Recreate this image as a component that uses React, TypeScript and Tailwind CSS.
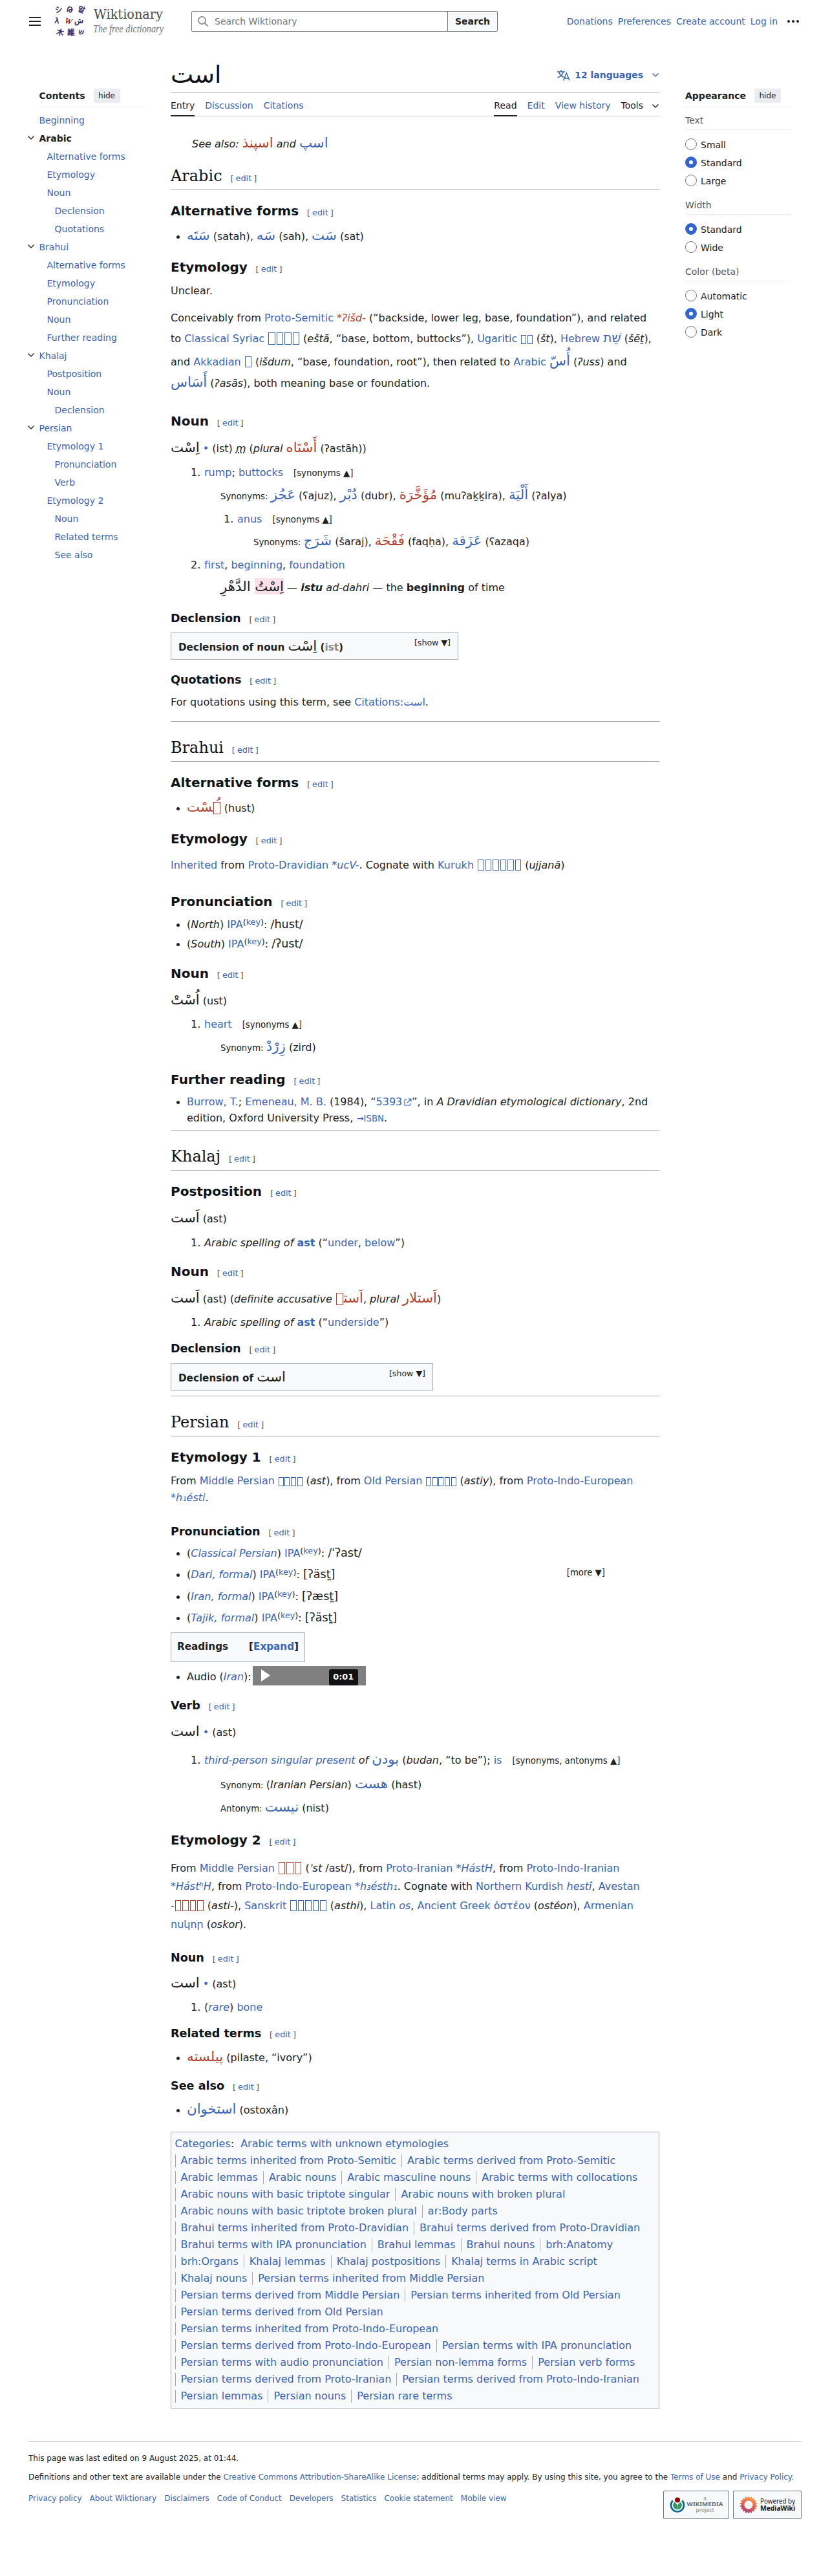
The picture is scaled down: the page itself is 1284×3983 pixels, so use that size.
import type { ReactNode } from 'react'
import clsx from 'clsx'

type Kids = { children: ReactNode }

/** Blue link. */
function A({ children, className }: { children: ReactNode; className?: string }) {
  return <a href="#" className={clsx('text-[#3a65b6]', className)}>{children}</a>
}

/** Right-to-left term in the enlarged script size. */
function Ar({ children, red, plain, className }: { children: ReactNode; red?: boolean; plain?: boolean; className?: string }) {
  return (
    <bdi
      dir="rtl"
      className={clsx(
        'text-[21.3px] leading-[0] not-italic',
        plain ? 'text-[#202122]' : red ? 'text-[#b34231]' : 'text-[#3a65b6]',
        className,
      )}
    >
      {children}
    </bdi>
  )
}

/** Term in another script. */
function Script({ children, className }: { children: ReactNode; className?: string }) {
  return <bdi className={clsx('leading-[0]', className ?? 'text-[#3a65b6]')}>{children}</bdi>
}

/** Placeholder for a character without a glyph. */
function Box({ children }: { children?: ReactNode }) {
  return (
    <span className="relative mx-[.05em] inline-block h-[.88em] w-[.5em] border border-current align-[-.17em]">{children}</span>
  )
}

function Boxes({ n, className }: { n: number; className: string }) {
  return (
    <bdi className={clsx('leading-[0]', className)}>
      {Array.from({ length: n }, (_, i) => <Box key={i} />)}
    </bdi>
  )
}

function Line({ children, className }: { children: ReactNode; className: string }) {
  return <div className={clsx('h-[25px] leading-[25px] whitespace-nowrap', className)}>{children}</div>
}

function Bullet({ children, className }: { children: ReactNode; className?: string }) {
  return (
    <div className={clsx('h-[25px] leading-[25px] whitespace-nowrap flex items-center pl-[9px]', className)}>
      <span className="w-[5px] h-[5px] mt-[2px] rounded-full bg-[#202122] mr-[11px]" />
      <div className="h-[25px]">{children}</div>
    </div>
  )
}

function Item({ n, children, className }: { n: number; children: ReactNode; className: string }) {
  return (
    <div className={clsx('h-[25px] leading-[25px] whitespace-nowrap flex', className)}>
      <span className="w-[21px] shrink-0">{n}.</span>
      <div>{children}</div>
    </div>
  )
}

function Edit() {
  return (
    <span className="ml-[12.8px] text-[12.8px] leading-[0] font-normal text-[#54595d] [font-family:'DejaVu_Sans',sans-serif]">
      <span className="mr-[3.2px]">[</span>
      <A>edit</A>
      <span className="ml-[3.2px]">]</span>
    </span>
  )
}

function H2({ children, className }: { children: ReactNode; className: string }) {
  return (
    <h2 className={clsx("h-[36px] border-b border-[#a2a9b1] text-[24px] leading-[28px] text-[#101418] [font-family:'DejaVu_Serif',serif]", className)}>
      {children}
      <Edit />
    </h2>
  )
}

function H3({ children, className }: { children: ReactNode; className: string }) {
  return (
    <h3 className={clsx('h-[24px] text-[20px] leading-[24px] font-bold text-[#101418]', className)}>
      {children}
      <Edit />
    </h3>
  )
}

function H4({ children, className }: { children: ReactNode; className: string }) {
  return (
    <h4 className={clsx('h-[20px] text-[17.6px] leading-[20px] font-bold text-[#101418]', className)}>
      {children}
      <Edit />
    </h4>
  )
}

function Small({ children }: Kids) {
  return <span className="text-[13.3px]">{children}</span>
}

function Toggle({ children }: Kids) {
  return <span className="ml-4 text-[13.3px]">[{children} ▲]</span>
}

function Ipa({ where, link, children }: { where: string; link?: boolean; children: ReactNode }) {
  return (
    <>
      (<i className={link ? 'text-[#3a65b6]' : ''}>{where}</i>) <A>IPA</A>
      <span className="align-[5px] text-[12.8px] leading-[0]">(<A>key</A>)</span>:{' '}
      <span className="text-[17.6px] leading-[0]">{children}</span>
    </>
  )
}

function Chevron({ className }: { className?: string }) {
  return (
    <svg width="12" height="12" viewBox="0 0 12 12" fill="none" stroke="currentColor" strokeWidth="1.3" className={className}>
      <path d="M1.500 3.500 6 8l4.500-4.500" />
    </svg>
  )
}

const TOC: { label: string; level: number; open?: boolean; active?: boolean }[] = [
  { label: 'Beginning', level: 0 },
  { label: 'Arabic', level: 0, open: true, active: true },
  { label: 'Alternative forms', level: 1 },
  { label: 'Etymology', level: 1 },
  { label: 'Noun', level: 1 },
  { label: 'Declension', level: 2 },
  { label: 'Quotations', level: 2 },
  { label: 'Brahui', level: 0, open: true },
  { label: 'Alternative forms', level: 1 },
  { label: 'Etymology', level: 1 },
  { label: 'Pronunciation', level: 1 },
  { label: 'Noun', level: 1 },
  { label: 'Further reading', level: 1 },
  { label: 'Khalaj', level: 0, open: true },
  { label: 'Postposition', level: 1 },
  { label: 'Noun', level: 1 },
  { label: 'Declension', level: 2 },
  { label: 'Persian', level: 0, open: true },
  { label: 'Etymology 1', level: 1 },
  { label: 'Pronunciation', level: 2 },
  { label: 'Verb', level: 2 },
  { label: 'Etymology 2', level: 1 },
  { label: 'Noun', level: 2 },
  { label: 'Related terms', level: 2 },
  { label: 'See also', level: 2 },
]

const INDENT = ['pl-0', 'pl-3', 'pl-6']

const CATEGORIES: string[][] = [
  ['Arabic terms inherited from Proto-Semitic', 'Arabic terms derived from Proto-Semitic'],
  ['Arabic lemmas', 'Arabic nouns', 'Arabic masculine nouns', 'Arabic terms with collocations'],
  ['Arabic nouns with basic triptote singular', 'Arabic nouns with broken plural'],
  ['Arabic nouns with basic triptote broken plural', 'ar:Body parts'],
  ['Brahui terms inherited from Proto-Dravidian', 'Brahui terms derived from Proto-Dravidian'],
  ['Brahui terms with IPA pronunciation', 'Brahui lemmas', 'Brahui nouns', 'brh:Anatomy'],
  ['brh:Organs', 'Khalaj lemmas', 'Khalaj postpositions', 'Khalaj terms in Arabic script'],
  ['Khalaj nouns', 'Persian terms inherited from Middle Persian'],
  ['Persian terms derived from Middle Persian', 'Persian terms inherited from Old Persian'],
  ['Persian terms derived from Old Persian'],
  ['Persian terms inherited from Proto-Indo-European'],
  ['Persian terms derived from Proto-Indo-European', 'Persian terms with IPA pronunciation'],
  ['Persian terms with audio pronunciation', 'Persian non-lemma forms', 'Persian verb forms'],
  ['Persian terms derived from Proto-Iranian', 'Persian terms derived from Proto-Indo-Iranian'],
  ['Persian lemmas', 'Persian nouns', 'Persian rare terms'],
]

// [glyph, x, y, rotation]
const LOGO_TILES: [string, number, number, number][] = [
  ['シ', 8, 12, -8],
  ['Թ', 25, 12, 10],
  ['말', 43, 12, 18],
  ['λ', 5, 29, 6],
  ['ش', 39, 29, 0],
  ['木', 10, 47, 14],
  ['維', 27, 47, 0],
  ['ש', 43, 46, 5],
]

function Logo() {
  return (
    <div className="flex items-center">
      <svg width="52" height="52" viewBox="0 0 52 52" className="overflow-visible [font-family:'DejaVu_Sans','Noto_Sans_CJK_JP','Noto_Sans_CJK_KR',sans-serif]">
        {LOGO_TILES.map(([glyph, x, y, r]) => (
          <text key={glyph} x={x} y={y} fontSize="11.5" stroke="#1a1259" strokeWidth=".4" fill="#1a1259" textAnchor="middle" transform={`rotate(${r} ${x} ${y - 4})`}>
            {glyph}
          </text>
        ))}
        <text x="23" y="30" fontSize="13" fontStyle="italic" fontWeight="bold" fill="#a31414" textAnchor="middle" transform="rotate(14 23 25)" className="[font-family:'Liberation_Serif',serif]">
          W
        </text>
      </svg>
      <svg width="112" height="48" viewBox="0 0 112 48" className="ml-[9px] overflow-visible [font-family:'DejaVu_Serif',serif]">
        <text x="1" y="20" fontSize="20" fill="#474b50" textLength="107" lengthAdjust="spacingAndGlyphs">Wiktionary</text>
        <text x="0" y="41" fontSize="17" fontStyle="italic" fill="#72777d" textLength="109" lengthAdjust="spacingAndGlyphs" className="[font-family:'Liberation_Serif',serif]">
          The free dictionary
        </text>
      </svg>
    </div>
  )
}

function Header() {
  return (
    <header className="flex h-[66px] items-center pl-[45px] pr-[48px] text-[14px]">
      <div className="flex w-[18px] flex-col gap-[4px]">
        <span className="h-[2px] bg-[#202122]" />
        <span className="h-[2px] bg-[#202122]" />
        <span className="h-[2px] bg-[#202122]" />
      </div>
      <div className="ml-[20px] w-[213px]"><Logo /></div>
      <div className="flex h-[32px] w-[474px] items-stretch rounded-[2px] border border-[#72777d]">
        <div className="flex flex-1 items-center gap-[9px] pl-[8px] text-[#72777d]">
          <svg width="18" height="18" viewBox="0 0 18 18" fill="none" stroke="#8b9095" strokeWidth="1.8">
            <circle cx="7.500" cy="7.500" r="5.600" />
            <path d="m11.500 11.500 5 5" />
          </svg>
          Search Wiktionary
        </div>
        <button type="button" className="w-[77px] border-l border-[#72777d] bg-[#f8f9fa] font-bold text-[#202122]">Search</button>
      </div>
      <nav className="ml-auto flex items-center gap-[8px]">
        <A>Donations</A>
        <A>Preferences</A>
        <A>Create account</A>
        <A>Log in</A>
        <span className="ml-[7px] flex gap-[3px]">
          <span className="h-[4px] w-[4px] rounded-full bg-[#202122]" />
          <span className="h-[4px] w-[4px] rounded-full bg-[#202122]" />
          <span className="h-[4px] w-[4px] rounded-full bg-[#202122]" />
        </span>
      </nav>
    </header>
  )
}

function PanelTitle({ children }: Kids) {
  return (
    <div className="flex h-[29px] items-start border-b border-[#eaecf0]">
      <span className="text-[14px] leading-[22px] font-bold text-[#202122]">{children}</span>
      <span className="ml-[13px] h-[22px] rounded-[2px] bg-[#eaecf0] px-[7.500px] text-[12px] leading-[22px] text-[#202122]">hide</span>
    </div>
  )
}

function Contents() {
  return (
    <nav className="w-[264px] shrink-0 pt-[71px] pl-[60.5px]">
      <div className="w-[164px]">
        <PanelTitle>Contents</PanelTitle>
        <ul className="mt-[6px] text-[14px] leading-[28px]">
          {TOC.map((t, i) => (
            <li key={i} className={clsx('relative h-[28px]', INDENT[t.level])}>
              {t.open && <Chevron className="absolute top-[7px] -left-[19px] text-[#202122]" />}
              {t.active ? <b className="text-[#202122]">{t.label}</b> : <A>{t.label}</A>}
            </li>
          ))}
        </ul>
      </div>
    </nav>
  )
}

function RadioGroup({ title, options, value, className }: { title: string; options: string[]; value: string; className: string }) {
  return (
    <div className={clsx('text-[14px]', className)}>
      <div className="h-[23px] border-b border-[#eaecf0] leading-[16px] text-[#54595d]">{title}</div>
      <div className="mt-[8px]">
        {options.map((o) => (
          <label key={o} className="flex h-[28px] items-center gap-[6px] text-[#202122]">
            {o === value ? (
              <span className="h-[18px] w-[18px] rounded-full border-[6px] border-[#3366cc] bg-white" />
            ) : (
              <span className="h-[18px] w-[18px] rounded-full border border-[#72777d] bg-white" />
            )}
            <span className="pt-[2px]">{o}</span>
          </label>
        ))}
      </div>
    </div>
  )
}

function Appearance() {
  return (
    <aside className="ml-[40px] w-[164px] pt-[71px]">
      <PanelTitle>Appearance</PanelTitle>
      <RadioGroup className="mt-[12px]" title="Text" options={['Small', 'Standard', 'Large']} value="Standard" />
      <RadioGroup className="mt-[16px]" title="Width" options={['Standard', 'Wide']} value="Standard" />
      <RadioGroup className="mt-[16px]" title="Color (beta)" options={['Automatic', 'Light', 'Dark']} value="Light" />
    </aside>
  )
}

function PageTitle() {
  return (
    <>
      <div className="flex h-[77px] items-end justify-between border-b border-[#a2a9b1]">
        <h1 dir="rtl" className="text-[37.4px] leading-[54px] text-[#101418]">است</h1>
        <div className="flex h-[52px] items-center text-[14px] font-bold text-[#3a65b6]">
          <svg width="20" height="17" viewBox="0 0 20 17" fill="none" stroke="currentColor" strokeWidth="1.5">
            <path d="M0 3h12M6 0v3M2.500 3c1 4 4 7 7.500 8.500M9.500 3C8.500 7 5 10.500.5 12M9.500 16.500 14.300 5l4.800 11.500M11 13h6.500" />
          </svg>
          <span className="ml-[7px]">12 languages</span>
          <Chevron className="ml-[13px]" />
        </div>
      </div>
      <div className="flex h-[37px] items-end justify-between border-b border-[#c8ccd1] text-[14px] leading-[29px]">
        <div className="-mb-px flex gap-[16px]">
          <span className="border-b-2 border-[#202122]">Entry</span>
          <A>Discussion</A>
          <A>Citations</A>
        </div>
        <div className="-mb-px flex gap-[16px]">
          <span className="border-b-2 border-[#202122]">Read</span>
          <A>Edit</A>
          <A>View history</A>
          <span className="flex">Tools<Chevron className="mt-[9px] ml-[13px]" /></span>
        </div>
      </div>
    </>
  )
}

function NavBox({ children, className }: { children: ReactNode; className: string }) {
  return (
    <div className={clsx('flex h-[42px] justify-between border border-[#a2a9b1] bg-[#f8f9fa] px-[11px] text-[15.2px] leading-[18px] font-bold', className)}>
      <div className="pt-[13px]">{children}</div>
      <span className="pt-[6px] text-[12.6px] font-normal">[show ▼]</span>
    </div>
  )
}

function ArabicSection() {
  return (
    <section>
      <H2 className="mt-[23px]">Arabic</H2>
      <H3 className="mt-[20px]">Alternative forms</H3>
      <Bullet className="mt-[15px]">
        <Ar>سَتَه</Ar> (satah), <Ar>سَه</Ar> (sah), <Ar>سَت</Ar> (sat)
      </Bullet>
      <H3 className="mt-[23px]">Etymology</H3>
      <Line className="mt-[12px]">Unclear.</Line>
      <Line className="mt-[17px]">
        Conceivably from <A>Proto-Semitic</A> <i className="text-[#b34231]">*ʔišd-</i> (“backside, lower leg, base, foundation”), and related
      </Line>
      <Line className="mt-[7px]">
        to <A>Classical Syriac</A> <Boxes n={4} className="text-[20.8px] text-[#3a65b6]" /> (<i>eštā</i>, “base, bottom, buttocks”), <A>Ugaritic</A>{' '}
        <Boxes n={2} className="text-[#3a65b6]" /> (<i>št</i>), <A>Hebrew</A> <Script className="text-[20px] text-[#3a65b6]">שֵׁת</Script> (<i>šēṯ</i>),
      </Line>
      <Line className="mt-[11px]">
        and <A>Akkadian</A> <Boxes n={1} className="text-[20px] text-[#3a65b6]" /> (<i>išdum</i>, “base, foundation, root”), then related to <A>Arabic</A>{' '}
        <Ar>أُسّ</Ar> (<i>ʔuss</i>) and
      </Line>
      <Line className="mt-[8px]">
        <Ar>أَسَاس</Ar> (<i>ʔasās</i>), both meaning base or foundation.
      </Line>
      <H3 className="mt-[34px]">Noun</H3>
      <Line className="mt-[18px]">
        <Ar plain>اِسْت</Ar> <A>•</A> (ist) <i className="underline decoration-dotted">m</i> (<i>plural</i> <Ar red>أَسْتَاه</Ar> (ʔastāh))
      </Line>
      <Item n={1} className="mt-[12px] ml-[31px]">
        <A>rump</A>; <A>buttocks</A><Toggle>synonyms</Toggle>
      </Item>
      <Line className="mt-[11px] ml-[77px]">
        <Small>Synonyms: </Small><Ar>عَجُز</Ar> (ʕajuz), <Ar>دُبْر</Ar> (dubr), <Ar red>مُؤَخَّرَة</Ar> (muʔaḵḵira), <Ar>أَلْيَة</Ar> (ʔalya)
      </Line>
      <Item n={1} className="mt-[11px] ml-[82px]">
        <A>anus</A><Toggle>synonyms</Toggle>
      </Item>
      <Line className="mt-[10px] ml-[128px]">
        <Small>Synonyms: </Small><Ar>شَرَج</Ar> (šaraj), <Ar red>فَقْحَة</Ar> (faqḥa), <Ar>عَزَقة</Ar> (ʕazaqa)
      </Line>
      <Item n={2} className="mt-[11px] ml-[31px]">
        <A>first</A>, <A>beginning</A>, <A>foundation</A>
      </Item>
      <Line className="mt-[10px] ml-[77px]">
        <Ar plain><span className="bg-[#fbdfe9]">اِسْتُ</span> الدَّهْرِ</Ar> — <i><b>istu</b> ad-dahri</i> — the <b>beginning</b> of time
      </Line>
      <H4 className="mt-[25px]">Declension</H4>
      <NavBox className="mt-[12px] w-[445px]">
        Declension of noun <Ar plain className="text-[20.2px] font-normal">اِسْت</Ar> (<span className="text-[#888]">ist</span>)
      </NavBox>
      <H4 className="mt-[21px]">Quotations</H4>
      <Line className="mt-[12px]">
        For quotations using this term, see <A>Citations:<bdi>است</bdi></A>.
      </Line>
    </section>
  )
}

function BrahuiSection() {
  return (
    <section className="mt-[17px] border-t border-[#a2a9b1]">
      <H2 className="mt-[26px]">Brahui</H2>
      <H3 className="mt-[20px]">Alternative forms</H3>
      <Bullet className="mt-[15px]">
        <Ar red>
          <Box><span className="absolute top-[3px] left-[2px]">{'\u00a0\u064f'}</span></Box>
          {'\u200d'}سْت
        </Ar>{' '}
        (hust)
      </Bullet>
      <H3 className="mt-[23px]">Etymology</H3>
      <Line className="mt-[16px]">
        <A>Inherited</A> from <A>Proto-Dravidian</A> <A className="italic">*ucV-</A>. Cognate with <A>Kurukh</A>{' '}
        <Boxes n={6} className="text-[19.2px] text-[#3a65b6]" /> (<i>ujjanā</i>)
      </Line>
      <H3 className="mt-[32px]">Pronunciation</H3>
      <Bullet className="mt-[11px]"><Ipa where="North">/hust/</Ipa></Bullet>
      <Bullet className="mt-[5px]"><Ipa where="South">/ʔust/</Ipa></Bullet>
      <H3 className="mt-[21px]">Noun</H3>
      <Line className="mt-[18px]"><Ar plain>اُسْتْ</Ar> (ust)</Line>
      <Item n={1} className="mt-[11px] ml-[31px]"><A>heart</A><Toggle>synonyms</Toggle></Item>
      <Line className="mt-[11px] ml-[77px]"><Small>Synonym: </Small><Ar>زِرْدْ</Ar> (zird)</Line>
      <H3 className="mt-[25px]">Further reading</H3>
      <Bullet className="mt-[10px]">
        <A>Burrow, T.</A>; <A>Emeneau, M. B.</A> (1984), “<A>5393</A>
        <svg width="12" height="12" viewBox="0 0 12 12" fill="none" stroke="#3366cc" strokeWidth="1.2" className="ml-[3px] inline-block align-[-1px]">
          <path d="M4.500 2.500H1v8.500h8.500V7.500M6.500 1H11v4.500M11 1 5 7" />
        </svg>
        ”, in <i>A Dravidian etymological dictionary</i>, 2nd
      </Bullet>
      <Line className="ml-[25px]">edition, Oxford University Press, <A className="text-[13.3px]">→ISBN</A>.</Line>
    </section>
  )
}

function KhalajSection() {
  return (
    <section className="mt-[6px] border-t border-[#a2a9b1]">
      <H2 className="mt-[26px]">Khalaj</H2>
      <H3 className="mt-[20px]">Postposition</H3>
      <Line className="mt-[18px]"><Ar plain>اَست</Ar> (ast)</Line>
      <Item n={1} className="mt-[12px] ml-[31px]">
        <i>Arabic spelling of</i> <A className="font-bold">ast</A> (“<A>under</A>, <A>below</A>”)
      </Item>
      <H3 className="mt-[20px]">Noun</H3>
      <Line className="mt-[18px]">
        <Ar plain>اَست</Ar> (ast) (<i>definite accusative</i> <Ar red>اَست{'\u200d'}<Box /></Ar>, <i>plural</i> <Ar red>اَستلار</Ar>)
      </Line>
      <Item n={1} className="mt-[11px] ml-[31px]">
        <i>Arabic spelling of</i> <A className="font-bold">ast</A> (“<A>underside</A>”)
      </Item>
      <H4 className="mt-[18px]">Declension</H4>
      <NavBox className="mt-[13px] w-[406px]">
        Declension of <Ar plain className="text-[20.2px] font-normal">است</Ar>
      </NavBox>
    </section>
  )
}

function PersianSection() {
  return (
    <section className="mt-[8px] border-t border-[#a2a9b1]">
      <H2 className="mt-[26px]">Persian</H2>
      <H3 className="mt-[20px]">Etymology 1</H3>
      <Line className="mt-[12px]">
        From <A>Middle Persian</A> <Boxes n={4} className="text-[#3a65b6]" /> (<i>ast</i>), from <A>Old Persian</A>{' '}
        <Boxes n={5} className="text-[#3a65b6]" /> (<i>astiy</i>), from <A>Proto-Indo-European</A>
      </Line>
      <Line className="mt-px"><A className="italic">*h₁ésti</A>.</Line>
      <H4 className="mt-[30px]">Pronunciation</H4>
      <Bullet className="mt-[11px]"><Ipa link where="Classical Persian">/ˈʔast/</Ipa></Bullet>
      <div className="mt-[8px] flex justify-between pr-[84px]">
        <Bullet><Ipa link where="Dari, formal">[ʔäst̪]</Ipa></Bullet>
        <span className="-mt-[3px] h-[25px] text-[13.3px] leading-[25px]">[more ▼]</span>
      </div>
      <Bullet className="mt-[9px]"><Ipa link where="Iran, formal">[ʔæst̪]</Ipa></Bullet>
      <Bullet className="mt-[8px]"><Ipa link where="Tajik, formal">[ʔäst̪]</Ipa></Bullet>
      <div className="mt-[10px] flex h-[46px] w-[208px] justify-between border border-[#a2a9b1] bg-[#f8f9fa] px-[9px] text-[15.2px] leading-[42px] font-bold">
        <span>Readings</span>
        <span>[<A>Expand</A>]</span>
      </div>
      <div className="mt-[6px] flex h-[30px]">
        <Bullet className="mt-[4px]">Audio (<A className="italic">Iran</A>):</Bullet>
        <div className="ml-[2px] flex w-[175px] items-start bg-[#808080]">
          <svg width="14" height="19" viewBox="0 0 14 19" className="mt-[5px] ml-[13px]">
            <path d="M0 0v19l14-9.500z" fill="#fff" />
          </svg>
          <span className="mt-[5px] ml-[91px] h-[25px] w-[45px] rounded-[3px] bg-[#101214] text-center text-[12.8px] leading-[24px] font-bold text-white">0:01</span>
        </div>
      </div>
      <H4 className="mt-[21px]">Verb</H4>
      <Line className="mt-[19px]"><Ar plain>است</Ar> <A>•</A> (ast)</Line>
      <Item n={1} className="mt-[18px] ml-[31px]">
        <A className="italic">third-person singular present</A> <i>of</i> <Ar>بودن</Ar> (<i>budan</i>, “to be”); <A>is</A><Toggle>synonyms, antonyms</Toggle>
      </Item>
      <Line className="mt-[13px] ml-[77px]">
        <Small>Synonym: </Small>(<i>Iranian Persian</i>) <Ar>هست</Ar> (hast)
      </Line>
      <Line className="mt-[11px] ml-[77px]"><Small>Antonym: </Small><Ar>نیست</Ar> (nist)</Line>
      <H3 className="mt-[25px]">Etymology 2</H3>
      <Line className="mt-[19px]">
        From <A>Middle Persian</A> <Boxes n={3} className="text-[20.8px] text-[#b34231]" /> (<i>ʾst</i> /ast/), from <A>Proto-Iranian</A>{' '}
        <A className="italic">*HástH</A>, from <A>Proto-Indo-Iranian</A>
      </Line>
      <Line className="mt-[3px]">
        <A className="italic">*HástʰH</A>, from <A>Proto-Indo-European</A> <A className="italic">*h₃ésth₁</A>. Cognate with <A>Northern Kurdish</A>{' '}
        <A className="italic">hestî</A>, <A>Avestan</A>
      </Line>
      <Line className="mt-[5px]">
        <span className="text-[#b34231]">-</span><Boxes n={4} className="text-[19.2px] text-[#b34231]" /> (<i>asti-</i>), <A>Sanskrit</A>{' '}
        <Boxes n={5} className="text-[19.2px] text-[#3a65b6]" /> (<i>asthi</i>), <A>Latin</A> <A className="italic">os</A>, <A>Ancient Greek</A>{' '}
        <Script>ὀστέον</Script> (<i>ostéon</i>), <A>Armenian</A>
      </Line>
      <Line className="mt-[4px]"><Script>ոսկոր</Script> (<i>oskor</i>).</Line>
      <H4 className="mt-[29px]">Noun</H4>
      <Line className="mt-[18px]"><Ar plain>است</Ar> <A>•</A> (ast)</Line>
      <Item n={1} className="mt-[11px] ml-[31px]">(<A className="italic">rare</A>) <A>bone</A></Item>
      <H4 className="mt-[18px]">Related terms</H4>
      <Bullet className="mt-[15px]"><Ar red>پیلسته</Ar> (pilaste, “ivory”)</Bullet>
      <H4 className="mt-[21px]">See also</H4>
      <Bullet className="mt-[15px]"><Ar>استخوان</Ar> (ostoxân)</Bullet>
    </section>
  )
}

function Categories() {
  return (
    <div className="mt-[21px] h-[428px] border border-[#a2a9b1] bg-[#f8f9fa] px-[5.500px] pt-[5px] leading-[26px]">
      <div className="h-[26px] whitespace-nowrap">
        <A>Categories</A>:<A className="ml-[10px]">Arabic terms with unknown etymologies</A>
      </div>
      {CATEGORIES.map((row) => (
        <ul key={row[0]} className="flex h-[26px] items-center whitespace-nowrap">
          {row.map((c) => (
            <li key={c} className="h-[20px] border-l border-[#a2a9b1] px-[8px] leading-[20px]"><A>{c}</A></li>
          ))}
        </ul>
      ))}
    </div>
  )
}

// Sunflower outline: alternating outer and inner points.
const PETALS = Array.from({ length: 36 }, (_, i) => {
  const r = i % 2 ? 10.8 : 13.8
  const a = (i * Math.PI) / 18
  return `${(r * Math.sin(a)).toFixed(2)},${(-r * Math.cos(a)).toFixed(2)}`
}).join(' ')

function Sunflower() {
  return (
    <svg width="28" height="28" viewBox="-14 -14 28 28">
      <defs>
        <linearGradient id="sunflower" x1=".7" y1="0" x2=".35" y2="1">
          <stop offset="0" stopColor="#fba640" />
          <stop offset=".5" stopColor="#f0604a" />
          <stop offset="1" stopColor="#9c3b86" />
        </linearGradient>
      </defs>
      <polygon points={PETALS} fill="url(#sunflower)" />
      <circle r="6.500" fill="#f8f9fa" />
    </svg>
  )
}

function Footer() {
  return (
    <footer className="mx-[44px] mt-[50px] border-t border-[#a2a9b1] text-[12px] leading-[15px]">
      <div className="mt-[19px]">This page was last edited on 9 August 2025, at 01:44.</div>
      <div className="mt-[14px] whitespace-nowrap">
        Definitions and other text are available under the <A>Creative Commons Attribution-ShareAlike License</A>; additional terms may apply. By using this
        site, you agree to the <A>Terms of Use</A> and <A>Privacy Policy.</A>
      </div>
      <div className="mt-[13px] flex justify-between">
        <div className="mt-[5px] flex gap-[12px]">
          {['Privacy policy', 'About Wiktionary', 'Disclaimers', 'Code of Conduct', 'Developers', 'Statistics', 'Cookie statement', 'Mobile view'].map((t) => (
            <A key={t}>{t}</A>
          ))}
        </div>
        <div className="flex gap-[6px]">
          <div className="flex h-[44px] w-[102px] items-center rounded-[2px] border border-[#72777d] bg-[#f8f9fa] pl-[9px]">
            <svg width="24" height="24" viewBox="0 0 24 24" fill="none">
              <path d="M4.800 5.500a10 10 0 1 0 14.400 0" stroke="#069" strokeWidth="2.600" />
              <path d="M7.500 8a6.500 6.500 0 0 0 3.700 11V12zM16.500 8a6.500 6.500 0 0 1-3.700 11V12z" fill="#396" stroke="#396" />
              <circle cx="12" cy="4.500" r="4" fill="#900" />
            </svg>
            <svg width="58" height="28" viewBox="0 0 58 28" textAnchor="middle" className="ml-[2px] overflow-visible [font-family:'Noto_Sans',sans-serif]">
              <text x="28.500" y="6.500" fontSize="8" fill="#888">a</text>
              <text x="28.500" y="16.300" fontSize="9" fontWeight="bold" fill="#6a6e73" textLength="56" lengthAdjust="spacingAndGlyphs">WIKIMEDIA</text>
              <text x="28.500" y="24.700" fontSize="8.500" fill="#888" textLength="28" lengthAdjust="spacingAndGlyphs">project</text>
            </svg>
          </div>
          <div className="flex h-[44px] w-[106px] items-center rounded-[2px] border border-[#72777d] bg-[#f8f9fa] pl-[9px]">
            <Sunflower />
            <svg width="56" height="28" viewBox="0 0 56 28" fill="#101214" className="ml-[4px] overflow-visible [font-family:'Noto_Sans',sans-serif]">
              <text x="0" y="12" fontSize="10" textLength="54" lengthAdjust="spacingAndGlyphs">Powered by</text>
              <text x="0" y="23.300" fontSize="10" fontWeight="bold" textLength="54" lengthAdjust="spacingAndGlyphs">MediaWiki</text>
            </svg>
          </div>
        </div>
      </div>
    </footer>
  )
}

export default function App() {
  return (
    <div className="min-h-[3983px] w-[1284px] bg-white text-[16px] text-[#202122] [font-family:'DejaVu_Sans','Noto_Sans_CJK_SC',sans-serif]">
      <Header />
      <div className="flex">
        <Contents />
        <main className="w-[756px] shrink-0">
          <PageTitle />
          <Line className="mt-[30px] ml-[33px]">
            <i>See also:</i> <Ar red>اسپنذ</Ar> <i>and</i> <Ar>اسپ</Ar>
          </Line>
          <ArabicSection />
          <BrahuiSection />
          <KhalajSection />
          <PersianSection />
          <Categories />
        </main>
        <Appearance />
      </div>
      <Footer />
    </div>
  )
}
